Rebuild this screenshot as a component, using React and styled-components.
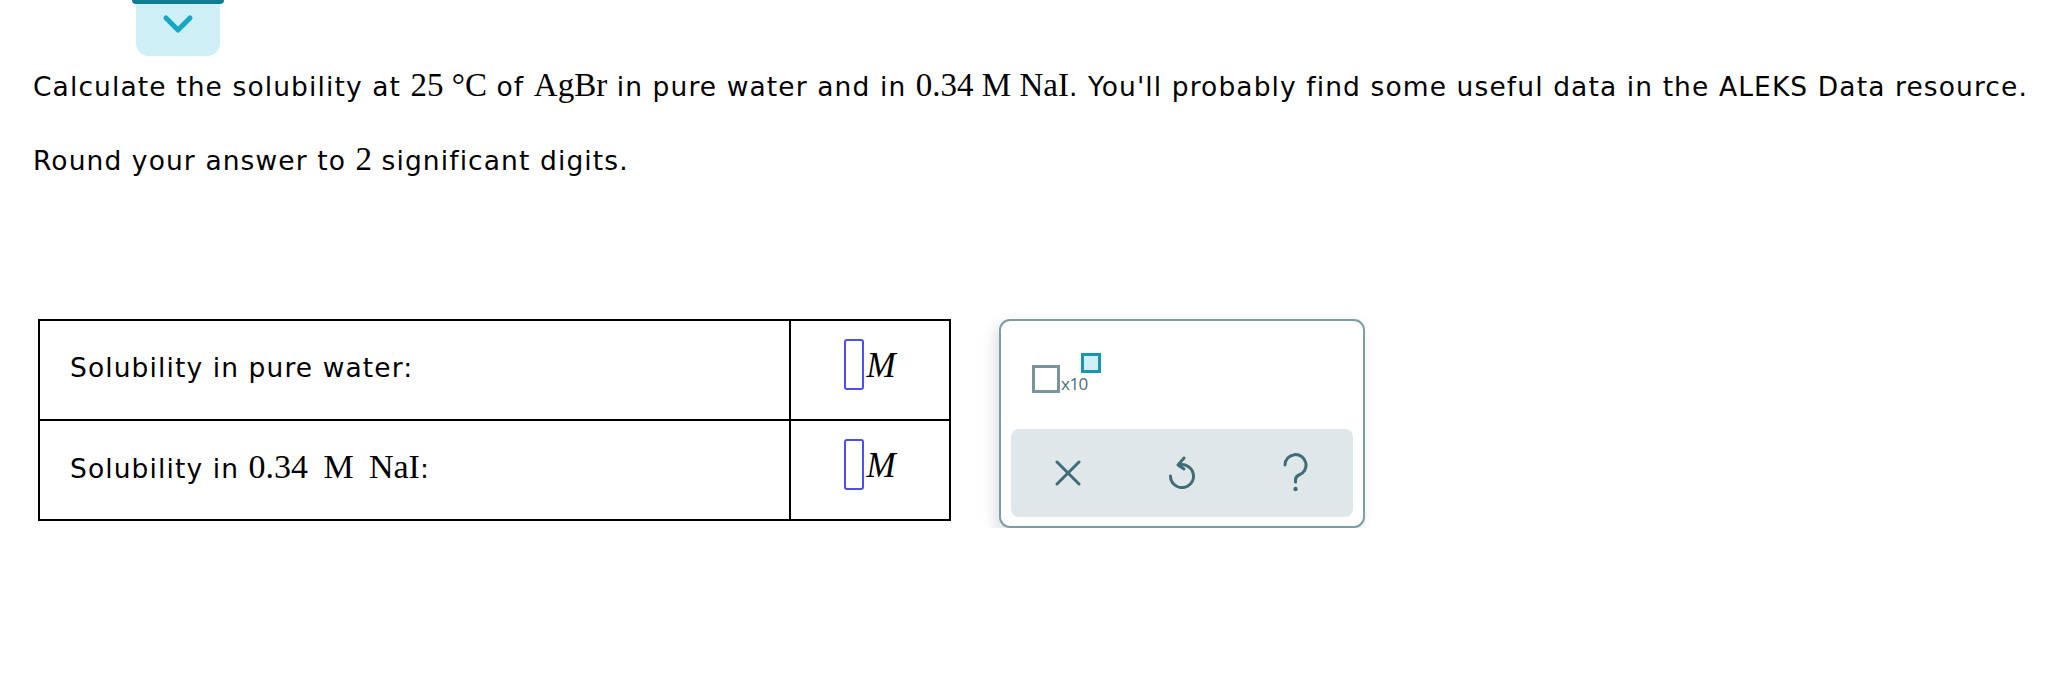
import React from "react";
import styled, { createGlobalStyle } from "styled-components";

const GlobalStyle = createGlobalStyle`
  html, body {
    margin: 0;
    padding: 0;
    background: #ffffff;
  }
  body {
    font-family: "DejaVu Sans", Verdana, sans-serif;
    color: #000000;
  }
`;

const Page = styled.div`
  padding-left: 33px;
`;

const TabRow = styled.div`
  padding-left: 103px;
  height: 56px;
`;

const Tab = styled.button`
  position: relative;
  width: 84px;
  height: 56px;
  border: none;
  padding: 0;
  background: #cdeff5;
  border-radius: 0 0 13px 13px;
  display: flex;
  align-items: center;
  justify-content: center;
  padding-bottom: 6px;

  &::before {
    content: "";
    position: absolute;
    top: 0;
    left: -4px;
    right: -4px;
    height: 4px;
    background: #0e7d91;
    border-radius: 0 0 4px 4px;
  }
`;

const Question = styled.p`
  margin: ${(p) => p.$top}px 0 0 0;
  font-size: 26.5px;
  letter-spacing: 1.1px;
  line-height: 36px;
  white-space: nowrap;
`;

const Math = styled.span`
  font-family: "Liberation Serif", "Times New Roman", serif;
  font-size: ${(p) => p.$size || 33}px;
  letter-spacing: 0;
`;

const Workspace = styled.div`
  display: flex;
  align-items: flex-start;
  gap: 48px;
  margin-top: 140px;
  padding-left: 5px;
`;

const AnswerTable = styled.table`
  border-collapse: collapse;
  border: 2px solid #000;
`;

const Row = styled.tr`
  height: 100px;
`;

const LabelCell = styled.td`
  width: 719px;
  border: 2px solid #000;
  padding: 0 0 6px 30px;
  font-size: 26.5px;
  letter-spacing: 1.1px;
  vertical-align: middle;
`;

const InputCell = styled.td`
  width: 158px;
  border: 2px solid #000;
  padding: 0 0 8px 0;
  text-align: center;
  vertical-align: middle;
`;

const AnswerWrap = styled.span`
  display: inline-flex;
  align-items: center;
`;

const AnswerBox = styled.span`
  display: inline-block;
  width: 16px;
  height: 47px;
  border: 2px solid #4b4ff2;
  border-radius: 3px;
`;

const Unit = styled.span`
  font-family: "Liberation Serif", "Times New Roman", serif;
  font-style: italic;
  font-size: 35px;
  margin-left: 2px;
  margin-top: 4px;
`;

const Palette = styled.div`
  width: 342px;
  height: 196px;
  border: 2px solid #7f9ca4;
  border-radius: 11px;
  background: #fff;
  box-shadow: -4px 6px 14px rgba(60, 80, 90, 0.18);
  display: flex;
  flex-direction: column;
  justify-content: space-between;
  padding: 0 10px 9px 10px;
  box-sizing: content-box;
`;

const TemplateArea = styled.div`
  display: flex;
  align-items: flex-start;
  padding: 32px 0 0 21px;
`;

const BaseBox = styled.span`
  display: inline-block;
  width: 22px;
  height: 22px;
  margin-top: 12px;
  border: 3px solid #7a949b;
`;

const TimesTen = styled.span`
  font-family: "Open Sans", "DejaVu Sans", sans-serif;
  font-size: 17px;
  color: #4c6c76;
  margin-top: 19px;
  margin-left: 1px;
  letter-spacing: -0.5px;
`;

const ExpBox = styled.span`
  display: inline-block;
  width: 14px;
  height: 14px;
  border: 3px solid #1796b1;
  background: #cdeff5;
  margin-left: -7px;
`;

const ActionBar = styled.div`
  height: 88px;
  border-radius: 8px;
  background: #e0e7e9;
  display: grid;
  grid-template-columns: repeat(3, 1fr);
  align-items: center;
  justify-items: center;
`;

const ActionButton = styled.button`
  border: none;
  background: transparent;
  padding: 0;
  display: flex;
  align-items: center;
  justify-content: center;
  color: #3f6c78;
`;

const Chevron = () => (
  <svg width="32" height="22" viewBox="0 0 32 22" fill="none">
    <path
      d="M4 4 L16 16 L28 4"
      stroke="#17a7c4"
      strokeWidth="5"
      strokeLinecap="round"
      strokeLinejoin="round"
    />
  </svg>
);

const ClearIcon = () => (
  <svg width="26" height="26" viewBox="0 0 26 26" fill="none">
    <path
      d="M2 2 L24 24 M24 2 L2 24"
      stroke="currentColor"
      strokeWidth="3"
      strokeLinecap="round"
    />
  </svg>
);

const UndoIcon = () => (
  <svg width="28" height="36" viewBox="0 0 28 36" fill="none">
    <path
      d="M11 10 A11.5 11.5 0 1 1 2.5 21"
      stroke="currentColor"
      strokeWidth="3"
      strokeLinecap="round"
    />
    <path
      d="M16 3 L10 10 L16 14"
      stroke="currentColor"
      strokeWidth="3"
      strokeLinecap="round"
      strokeLinejoin="round"
    />
  </svg>
);

const HelpIcon = () => (
  <svg width="28" height="40" viewBox="0 0 28 40" fill="none">
    <path
      d="M3 12 A10.5 10.5 0 1 1 17 22 C14.5 23 13.5 24.5 13.5 27 L13.5 29"
      stroke="currentColor"
      strokeWidth="3"
      strokeLinecap="round"
    />
    <circle cx="13.5" cy="36" r="2.2" fill="currentColor" />
  </svg>
);

const answers = [
  { label: <>Solubility in pure water:</> },
  {
    label: (
      <>
        Solubility in <Math $size={34}>0.34 &thinsp;M&thinsp; NaI</Math>:
      </>
    ),
  },
];

const App = () => {
  return (
    <>
      <GlobalStyle />
      <Page>
        <TabRow>
          <Tab aria-label="collapse">
            <Chevron />
          </Tab>
        </TabRow>
        <Question $top={11}>
          Calculate the solubility at <Math>25 °C</Math> of <Math>AgBr</Math> in
          pure water and in <Math>0.34 M NaI</Math>. You'll probably find some
          useful data in the ALEKS Data resource.
        </Question>
        <Question $top={36}>
          Round your answer to <Math>2</Math> significant digits.
        </Question>
        <Workspace>
          <AnswerTable>
            <tbody>
              {answers.map((row, i) => (
                <Row key={i}>
                  <LabelCell>{row.label}</LabelCell>
                  <InputCell>
                    <AnswerWrap>
                      <AnswerBox />
                      <Unit>M</Unit>
                    </AnswerWrap>
                  </InputCell>
                </Row>
              ))}
            </tbody>
          </AnswerTable>
          <Palette>
            <TemplateArea>
              <BaseBox />
              <TimesTen>x10</TimesTen>
              <ExpBox />
            </TemplateArea>
            <ActionBar>
              <ActionButton aria-label="clear">
                <ClearIcon />
              </ActionButton>
              <ActionButton aria-label="undo">
                <UndoIcon />
              </ActionButton>
              <ActionButton aria-label="help">
                <HelpIcon />
              </ActionButton>
            </ActionBar>
          </Palette>
        </Workspace>
      </Page>
    </>
  );
};

export default App;
